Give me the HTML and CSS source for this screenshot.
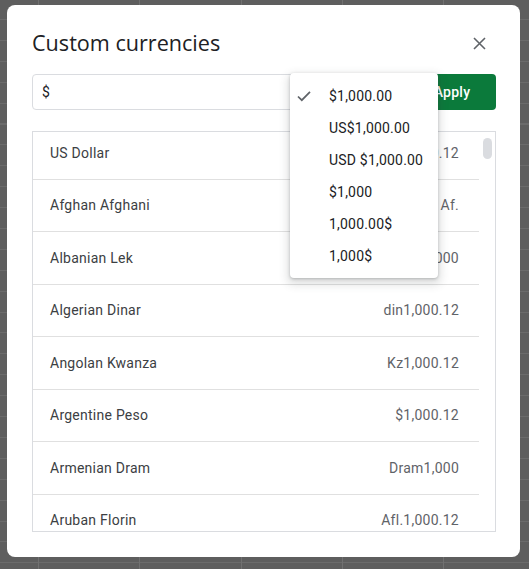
FILE: index.html
```html
<!DOCTYPE html>
<html>
<head>
<meta charset="utf-8">
<link rel="stylesheet" href="styles.css">
</head>
<body>
<div class="dialog">
  <div class="header">
    <h1 class="title">Custom currencies</h1>
    <button class="close" aria-label="Close">
      <svg width="13" height="13" viewBox="0 0 13 13"><path d="M1 1L12 12M12 1L1 12" stroke="#5f6368" stroke-width="1.6" fill="none"/></svg>
    </button>
  </div>
  <div class="controls">
    <div class="input">$</div>
    <button class="apply">Apply</button>
  </div>
  <div class="list">
    <div class="list-inner">
      <div class="row"><span class="name">US Dollar</span><span class="value">$1,000.12</span></div>
      <div class="row"><span class="name">Afghan Afghani</span><span class="value">1,000.12 Af.</span></div>
      <div class="row"><span class="name">Albanian Lek</span><span class="value">Lek1,000</span></div>
      <div class="row"><span class="name">Algerian Dinar</span><span class="value">din1,000.12</span></div>
      <div class="row"><span class="name">Angolan Kwanza</span><span class="value">Kz1,000.12</span></div>
      <div class="row"><span class="name">Argentine Peso</span><span class="value">$1,000.12</span></div>
      <div class="row"><span class="name">Armenian Dram</span><span class="value">Dram1,000</span></div>
      <div class="row"><span class="name">Aruban Florin</span><span class="value">Afl.1,000.12</span></div>
    </div>
    <div class="scroll-thumb"></div>
  </div>
  <div class="menu">
    <div class="item selected"><span class="check"><svg width="14" height="12" viewBox="0 0 14 12"><path d="M1 6.5L4.8 10.2L13 1.8" stroke="#5f6368" stroke-width="1.7" fill="none"/></svg></span>$1,000.00</div>
    <div class="item"><span class="check"></span>US$1,000.00</div>
    <div class="item"><span class="check"></span>USD $1,000.00</div>
    <div class="item"><span class="check"></span>$1,000</div>
    <div class="item"><span class="check"></span>1,000.00$</div>
    <div class="item"><span class="check"></span>1,000$</div>
  </div>
</div>
</body>
</html>
```
FILE: styles.css
```css
html, body {
  margin: 0;
  padding: 0;
}
body {
  width: 529px;
  height: 569px;
  overflow: hidden;
  padding: 5px 0 0 7px;
  box-sizing: border-box;
  background-color: #5e5e5e;
  background-image:
    repeating-linear-gradient(to right, transparent 0, transparent 38px, #707070 38px, #707070 39px, transparent 39px, transparent 101.3px),
    repeating-linear-gradient(to bottom, transparent 0, transparent 19px, #6b6b6b 19px, #6b6b6b 20px, transparent 20px, transparent 20.9px);
  font-family: Roboto, "Liberation Sans", sans-serif;
}
.dialog {
  position: relative;
  width: 513px;
  height: 552px;
  background: #fff;
  border-radius: 8px;
  box-sizing: border-box;
  padding: 22px 24px 25px 25px;
  display: flex;
  flex-direction: column;
}
.header {
  display: flex;
  align-items: center;
  justify-content: space-between;
  height: 32px;
}
.title {
  margin: 0;
  font-family: "Open Sans", Roboto, sans-serif;
  font-weight: 400;
  font-size: 21.6px;
  line-height: 28px;
  color: #202124;
}
.close {
  border: 0;
  background: none;
  padding: 0;
  width: 13px;
  height: 13px;
  margin-right: 10px;
  display: flex;
}
.controls {
  display: flex;
  gap: 12px;
  margin-top: 15px;
  height: 36px;
}
.input {
  flex: 1;
  border: 1px solid #dadce0;
  border-radius: 4px;
  padding: 0 9px;
  font-size: 14px;
  line-height: 34px;
  color: #202124;
}
.apply {
  width: 88px;
  border: 0;
  border-radius: 4px;
  background: #0b7a3b;
  color: #fff;
  font-family: Roboto, sans-serif;
  font-weight: 500;
  font-size: 14px;
  letter-spacing: 0.25px;
}
.list {
  position: relative;
  margin-top: 21px;
  flex: 1;
  border: 1px solid #dadce0;
  overflow: hidden;
}
.list-inner {
  margin-top: -5px;
  margin-right: 16px;
}
.row {
  height: 52.5px;
  box-sizing: border-box;
  border-bottom: 1px solid #e0e0e0;
  display: flex;
  align-items: center;
  justify-content: space-between;
  padding: 0 20px 0 17px;
  font-size: 14px;
  letter-spacing: 0.25px;
}
.name {
  color: #3c4043;
}
.value {
  color: #5f6368;
}
.scroll-thumb {
  position: absolute;
  right: 3px;
  top: 6px;
  width: 9px;
  height: 21px;
  border-radius: 5px;
  background: #dadce0;
}
.menu {
  position: absolute;
  left: 283px;
  top: 68px;
  width: 148px;
  padding: 7px 0 6px;
  background: #fff;
  border-radius: 4px;
  box-shadow: 0 1px 3px rgba(60,64,67,0.3), 0 4px 8px 3px rgba(60,64,67,0.15);
}
.item {
  height: 32px;
  display: flex;
  align-items: center;
  font-size: 14px;
  letter-spacing: 0.2px;
  color: #202124;
}
.check {
  width: 39px;
  padding-left: 7px;
  box-sizing: border-box;
  display: flex;
  align-items: center;
}
```
